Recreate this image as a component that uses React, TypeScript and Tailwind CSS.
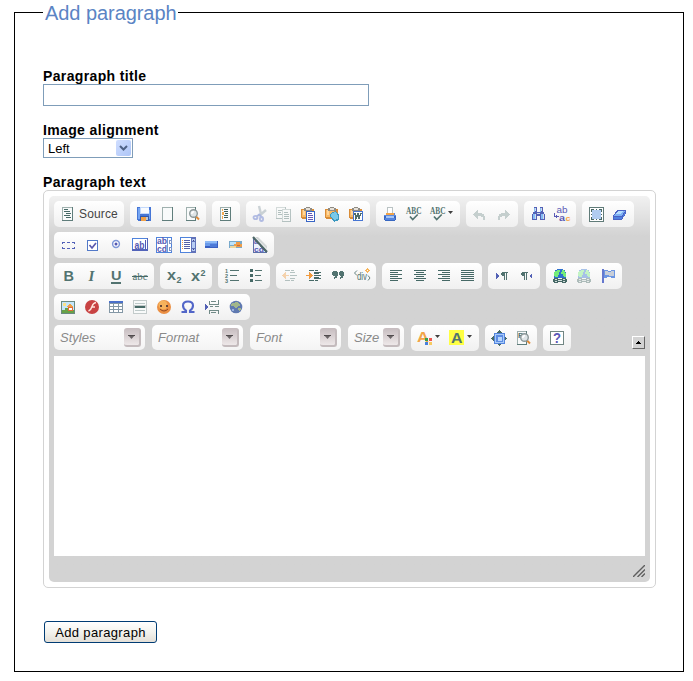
import type { ReactNode } from 'react';

const TEAL = '#527370';
const BLUE = '#5a59b5';

type GlyphProps = { x: number; y: number; s: number; c?: string; w?: number; b?: boolean; serif?: boolean; children: string };

function Label({ x, y, s, c = TEAL, w, b = true, serif = false, children }: GlyphProps) {
  return (
    <text x={x} y={y} fontSize={s} fill={c} textLength={w} lengthAdjust="spacingAndGlyphs" fontWeight={b ? 700 : 400} fontFamily={serif ? 'Liberation Serif, Times New Roman, serif' : 'Liberation Sans, Arial, sans-serif'}>
      {children}
    </text>
  );
}

function Page({ x = 2, w = 11, y = 1, h = 14, c = '#5f7d7b' }: { x?: number; w?: number; y?: number; h?: number; c?: string }) {
  return (
    <>
      <rect x={x + 0.5} y={y + 0.5} width={w - 1} height={h - 1} fill="#f8fafa" stroke="#9fb0ae" />
      <path d={`M${x + w - 0.5} ${y}V${y + h - 0.5}H${x}`} fill="none" stroke={c} />
    </>
  );
}

function Lens() {
  return (
    <g shapeRendering="auto">
      <path d="M12 10.5l3 3" stroke="#e08a38" strokeWidth="2" />
      <circle cx="9.5" cy="7.5" r="3.8" fill="#dfe5e7" stroke="#8c9899" strokeWidth="1.4" />
      <path d="M7.8 8q0-2.2 2.2-2.2" stroke="#fff" strokeWidth="1.5" fill="none" />
    </g>
  );
}

function Clip() {
  return (
    <>
      <path d="M1 3h13v10H2v-1H1z" fill="#d98d38" />
      <path d="M2 4h8v7H2z" fill="#f8ba67" />
      <path d="M3 4h2v5H3z" fill="#ffd69c" />
      <path d="M4 2h2V1h4v1h2v3H4z" fill="#8f8b83" />
      <path d="M6 2h4v2H6z" fill="#e5e0d8" />
    </>
  );
}

function Globe({ pale = false }: { pale?: boolean }) {
  return (
    <g opacity={pale ? 0.4 : 1}>
      <path d="M5 1h6v1h2v2h1v6H2V4h1V2h2z" fill="#2e70cf" />
      <path d="M5 2h3v2H7v3H6v2H3V8H2V4h1V3h2zM10 2h2v1h1v2h1v4h-2V8h-1V6H9V4h1z" fill="#74ec79" />
      <path d="M2 10h4v1h4v-1h4v1h1v3h-1v1h-4v-1H6v1H2v-1H1v-3h1z" fill="#466966" />
      <path d="M3 11h2v1H3zM11 11h2v1h-2zM6 12h4v1H6zM3 13h2v1H3zM11 13h2v1h-2z" fill="#d3dddd" />
    </g>
  );
}

const alignLines = (x1: number[], x2: number[]) => x1.map((a, k) => `M${a} ${2.5 + k * 2}H${x2[k]}`).join('');

const icons: Record<string, ReactNode> = {
  source: <><Page /><path d="M4 3.5h4M4 5.5h6M6 7.5h5M4 9.5h6M6 11.5h5" stroke="#466966" /></>,
  save: <><path d="M1 1h14v14H2v-1H1z" fill="#4676d6" /><path d="M2 2h2v11H2zM13 4h1v9h-1z" fill="#75a5f2" /><path d="M4 1h9v7H4z" fill="#c4d9fb" /><path d="M5 2h8v5H5z" fill="#f8fbff" /><path d="M4 10h9v5H4z" fill="#3158ab" /><path d="M5 11h5v4H5z" fill="#f0a045" /><path d="M10 11h2v3h-2z" fill="#bfcad5" /></>,
  newpage: <Page />,
  preview: <><Page w={10} /><Lens /></>,
  template: <><Page /><path d="M4 3h1v2H4zM4 6h2v3H4zM4 10h1v3H4z" fill="#f5a84f" /><path d="M6 3.5h4M6 5.5h4M7 7.5h3M6 9.5h4M6 11.5h4" stroke="#405f5c" /></>,
  cut: <g opacity=".5" shapeRendering="auto"><path d="M7 0l2 8M14 4L7 10" stroke="#9cabb2" strokeWidth="2.4" /><path d="M8 8l-4 3M8 9l2 3" stroke="#6278c9" strokeWidth="2" /><ellipse cx="3.5" cy="11.5" rx="2" ry="1.7" fill="none" stroke="#7084d2" strokeWidth="1.8" /><ellipse cx="9.5" cy="13" rx="1.6" ry="2" fill="none" stroke="#7084d2" strokeWidth="1.8" /></g>,
  copy: <g opacity=".42"><Page x={0} w={10} y={1} h={12} /><path d="M2 4.5h4M2 6.5h3M2 8.5h4" stroke={TEAL} /><Page x={6} w={9} y={3} h={13} /><path d="M8 6.5h4M8 8.5h5M8 10.5h5M8 12.5h5" stroke={TEAL} /></g>,
  paste: <><Clip /><rect x="6.5" y="5.5" width="8" height="10" fill="#fff" stroke="#3865c5" /><path d="M8 7.5h4M8 9.5h5M8 11.5h5M8 13.5h5" stroke="#6558b6" /></>,
  pastetext: <><Clip /><path d="M7 7l5-2 3 4v5l-5 2-4-6z" fill="#3b98c0" /><path d="M8 7l4-1 2 4v3l-4 1-3-4z" fill="#79c9e8" /></>,
  pasteword: <><Clip /><rect x="5.5" y="5.5" width="9" height="9" fill="#fff" stroke="#4675d3" /><path d="M7 7l1 5 2-4 1 4 2-5" fill="none" stroke="#4e6d6b" strokeWidth="1.6" /></>,
  print: <><path d="M5 1h6v6H5z" fill="#bac3c4" /><path d="M6 2h4v5H6z" fill="#fff" /><path d="M4 7h9v2h1v2H2V9h2z" fill="#5d8bdf" /><path d="M4 7h8v2H4z" fill="#f2a346" /><path d="M2 10h12v4h-1v1H3v-1H2z" fill="#3867c1" /><path d="M4 10h8v2H4z" fill="#a5c5f7" /><path d="M3 12h10v2H3z" fill="#5685dc" /></>,
  spell: <><Label x={0} y={8} s={10} w={15.5} serif>ABC</Label><path d="M4 10.5l2.7 3 5-5" stroke={TEAL} strokeWidth="1.7" fill="none" shapeRendering="auto" /></>,
  undo: <path d="M1 8.5L6 4v3h4v1h2v2h1v4h-2v-3H9v-1H6v3z" fill="#c5cfce" />,
  redo: <path d="M14 8.5L9 4v3H5v1H3v2H2v4h2v-3h2v-1h3v3z" fill="#c5cfce" />,
  find: <><path d="M4 1h3v5h3V1h3v5h1v2h1v6h-5v-4H7v4H2V8h1V6h1z" fill="#5361b5" /><path d="M4 2h1v4H4zM3 8h2v5H3zM10 2h1v4h-1zM11 8h2v5h-2z" fill="#83bdf6" /><path d="M5 2h1v3H5zM5 8h1v5H5zM11 2h1v3h-1zM13 8h1v5h-1zM7 7h3v1H7z" fill="#d3dceb" /></>,
  replace: <><Label x={2.5} y={7.3} s={9} c={BLUE} w={11} b={false}>ab</Label><Label x={5} y={14.8} s={9} c={BLUE} w={6}>a</Label><Label x={11.5} y={14.8} s={8} c="#f6a548" w={5}>c</Label><path d="M.5 7v3.5h4M2.5 9v3" stroke={BLUE} fill="none" /></>,
  selectall: <><rect x="1.5" y="1.5" width="14" height="14" fill="#fff" stroke="#607b78" /><rect x="4" y="4" width="9" height="9" fill="#b1ccf1" /><path d="M3 3h3v1H4v2H3zM11 3h3v3h-1V4h-2zM3 11h1v2h2v1H3zM13 11h1v3h-3v-1h2zM8 3h1v1H8zM8 13h1v1H8zM3 8h1v1H3zM13 8h1v1h-1z" fill="#496764" /></>,
  eraser: <><path d="M5 4h9v3l-4 7H1v-4z" fill="#4a62c4" /><path d="M6 5h7l-3 5H2z" fill="#7fb1f3" /><path d="M2 11h8v2H2zM11 10l2-4v2l-2 4z" fill="#4f80e0" /><path d="M6 5h5l-2 3H4z" fill="#b5ddff" /></>,
  form: <path d="M2 5.5h3m2 0h3m2 0h3M2 11.5h3m2 0h3m2 0h3M2.5 5v2m0 3v2M14.5 5v2m0 3v2" stroke="#5261b8" />,
  checkbox: <><rect x="3.5" y="3.5" width="10" height="10" fill="#fff" stroke="#5279c8" /><path d="M5.5 8l2.5 3 4-5" fill="none" stroke="#5a59ae" strokeWidth="1.7" shapeRendering="auto" /></>,
  radio: <g shapeRendering="auto"><circle cx="8" cy="7" r="3.4" fill="#fff" stroke="#7f97d8" strokeWidth="1.5" /><circle cx="8" cy="7" r="1.5" fill="#5356b0" /></g>,
  textfield: <><rect x=".5" y="1.5" width="15" height="12" fill="#fff" stroke="#4f83dc" /><path d="M0 13h15.5V1" fill="none" stroke="#5263b9" strokeWidth="1.5" /><Label x={2.5} y={11.5} s={10.5} c="#5558b2" w={10}>ab</Label><path d="M13.5 3v9" stroke="#5558b2" /></>,
  textarea: <><rect x=".5" y=".5" width="15" height="15" fill="#fff" stroke="#4f83dc" /><Label x={1} y={7.2} s={8.5} c="#5558b2" w={10}>ab</Label><Label x={1} y={14.8} s={8.5} c="#5558b2" w={10}>cd</Label><path d="M11.5 1v14M13 3h2v3h-2zM13 10h2v3h-2z" stroke="#7b95cb" fill="none" /></>,
  select: <><rect x=".5" y=".5" width="15" height="15" fill="#fff" stroke="#4f83dc" /><path d="M2 3.5h1M2 5.5h1M2 7.5h1M2 9.5h1M2 11.5h1" stroke="#ee9c42" /><path d="M4 3.5h6M4 5.5h6M4 7.5h6M4 9.5h6M4 11.5h6" stroke="#5360a8" /><path d="M11 0h5v16h-5z" fill="#6172b9" /><path d="M12 2h3v2h-3zM12 5h3v6h-3zM12 12h3v2h-3z" fill="#b8cdf3" /><path d="M13 3h1v1h-1zM13 12h1v1h-1z" fill="#424285" /></>,
  button: <><path d="M1 4h13v7H1z" fill="#395fc2" /><path d="M1 4h12v2H1z" fill="#8db9f6" /><path d="M1 6h12v3H1z" fill="#6a9aea" /><path d="M6 7h7v3H6z" fill="#4d7ad8" /></>,
  imagebutton: <><path d="M1 4h13v7H1z" fill="#78a9cb" /><path d="M2 5h9v3H2z" fill="#bde3fa" /><path d="M6 9V7h2V5h4v2h2v3H6z" fill="#ed9c48" /><path d="M2 9h6v2H2z" fill="#ebd7a0" /><path d="M9 8h3v1H9z" fill="#cf6939" /></>,
  hidden: <><path d="M1.5 1v14.5h13z" fill="#eef2fb" stroke="#5c70a9" /><Label x={2} y={7} s={7} c="#5558b2">a</Label><Label x={2} y={14.8} s={8} c="#5558b2" w={10}>cd</Label><path d="M1 0l14 15" stroke="#4e6767" strokeWidth="2.2" fill="none" shapeRendering="auto" /><path d="M3 0l12 12V9L6 0z" fill="#d3d7d8" shapeRendering="auto" /></>,
  bold: <Label x={3.5} y={13} s={14} w={10.5}>B</Label>,
  italic: <text x="4.5" y="13" fontSize="15" fontWeight="700" fontStyle="italic" fill="#527370" fontFamily="Liberation Serif, Times New Roman, serif">I</text>,
  underline: <><Label x={3} y={12} s={13.5} w={10.5}>U</Label><path d="M3 15h10" stroke={TEAL} strokeWidth="2" /></>,
  strike: <><Label x={0.5} y={11.5} s={10} w={15} serif b={false}>abc</Label><path d="M0 8.5h16" stroke="#466966" /></>,
  subscript: <><Label x={1} y={12} s={15} w={9}>x</Label><Label x={10.5} y={15} s={9} w={5}>2</Label></>,
  superscript: <><Label x={1} y={13} s={15} w={9}>x</Label><Label x={10.5} y={7.5} s={9} w={5}>2</Label></>,
  numbered: <><Label x={1} y={4.8} s={5.5}>1</Label><Label x={1} y={9.8} s={5.5}>2</Label><Label x={1} y={14.8} s={5.5}>3</Label><path d="M6 2.5h9M6 7.5h7M6 12.5h9" stroke={TEAL} /></>,
  bulleted: <><path d="M2 1h3v3H2zM2 6h3v3H2zM2 11h3v3H2z" fill="#466966" /><path d="M7 2.5h7M7 7.5h6M7 12.5h7" stroke={TEAL} /></>,
  outdent: <g opacity=".4"><path d="M3 2.5h5M9 2.5h3M8 4.5h5M8 7.5h7M8 10.5h5M3 12.5h5M9 12.5h3" stroke={TEAL} /><path d="M4 4v3h3v1H4v3L0 7.5z" fill="#f19b3e" /></g>,
  indent: <><path d="M3 2.5h5M9 2.5h3M8 4.5h7M8 5.5h5M8 7.5h7M8 9.5h5M8 10.5h7M3 12.5h5M9 12.5h3" stroke="#466966" /><path d="M3 4v3H0v1h3v3l4-3.5z" fill="#f19b3e" /></>,
  quote: <path d="M3 3h4v1h1v4H7v2H5v1H4V9h1V8H3V7H2V4h1zM10 3h3v1h1v4h-1v2h-2v1h-1V9h1V8H10V7H9V4h1z" fill={TEAL} />,
  div: <><Label x={3} y={12} s={11} w={10} b={false}>div</Label><path d="M3 2.5L.5 5 3 7.5M14 7.5l2 2.5-2 2.5" stroke="#668280" fill="none" shapeRendering="auto" /><path d="M13.5 0l2.5 2.5L13.5 5 11 2.5z" fill="#f7b459" /><path d="M13 2h1v1h-1z" fill="#fff" /></>,
  left: <path d={alignLines([2, 2, 2, 2, 2, 2], [14, 10, 14, 10, 14, 10])} stroke="#466966" />,
  center: <path d={alignLines([2, 4, 2, 4, 2, 4], [14, 12, 14, 12, 14, 12])} stroke="#466966" />,
  right: <path d={alignLines([2, 6, 2, 6, 2, 6], [14, 14, 14, 14, 14, 14])} stroke="#466966" />,
  justify: <path d="M1 2.5h13M1 4.5h13M1 6.5h13M1 8.5h13M1 10.5h13M1 12.5h13" stroke="#466966" />,
  ltr: <><path d="M2 5v6l3-3z" fill="#5361b5" /><path d="M8 4h6v1h-1v7h-1V5h-1v7h-1V8H8V7H7V5h1z" fill={TEAL} /></>,
  rtl: <><path d="M14 5v6l-3-3z" fill="#5361b5" /><path d="M4 4h6v1H9v7H8V5H7v7H6V8H4V7H3V5h1z" fill={TEAL} /></>,
  link: <Globe />,
  unlink: <Globe pale />,
  anchor: <><path d="M2 1h2v14H2z" fill="#6578ce" /><path d="M4 2h4v1h3V2h4v8h-4v-1H7v1H4z" fill="#6b95e3" /><path d="M5 3h3v1h3V3h3v5H9V7H5z" fill="#c8ced8" /></>,
  image: <><rect x="1.5" y="2.5" width="13" height="12" fill="#c4e6fb" stroke="#6a8a80" /><path d="M2 11h3V9h3v2h6v3H2z" fill="#68a248" /><path d="M8 8h5v4H8z" fill="#e46a37" /><path d="M9 9h3v2H9z" fill="#fff" /><path d="M3 4h3v3H3z" fill="#fbe28a" /><path d="M7 8V7l3-2 4 3z" fill="#f0a045" /></>,
  flash: <g shapeRendering="auto"><circle cx="8" cy="8" r="7" fill="#c84343" /><path d="M12 3.5Q9 4 8 7.5T4.5 12M7.5 8H11" stroke="#ffe4db" strokeWidth="1.4" fill="none" /></g>,
  table: <><path d="M1 2h14v12H1z" fill="#8397a5" /><path d="M2 5h3v2H2zM6 5h4v2H6zM11 5h3v2h-3zM2 8h3v2H2zM6 8h4v2H6zM11 8h3v2h-3zM2 11h3v2H2zM6 11h4v2H6zM11 11h3v2h-3z" fill="#fff" /><path d="M1 2h14v2H1z" fill="#4a70ca" /></>,
  rule: <><path d="M1 1h14v14H1z" fill="#c3cbcb" /><path d="M2 2h12v4H2zM2 9h12v5H2z" fill="#f8fafa" /><path d="M3 4.5h10M3 11.5h10" stroke="#bdc9c9" /><path d="M3 7h10v2H3z" fill="#466966" /></>,
  smile: <g shapeRendering="auto"><circle cx="8" cy="8" r="7" fill="#eb8f43" /><circle cx="7" cy="6" r="4.5" fill="#fbc066" opacity=".7" /><path d="M4 6h2v2H4zM10 6h2v2h-2z" fill="#674435" /><path d="M4 10q4 4 8 0" fill="none" stroke="#914821" /></g>,
  omega: <path d="M1.5 13H6v-1.5Q3 9.5 3 6.5 3 2.5 8 2.5t5 4q0 3-3 5V13h4.5" stroke="#5266c8" strokeWidth="2.1" fill="none" shapeRendering="auto" />,
  break: <><path d="M1 5v6l3-3z" fill="#5361b5" /><path d="M5 2v3h9V1M5 15v-4h9v4M6 7.5h3M11 7.5h4M7 2.5h5M7 13.5h5" stroke="#718a87" fill="none" /></>,
  world: <><circle cx="8" cy="8" r="6.3" fill="#5f79b0" shapeRendering="auto" /><path d="M4 4h3V3h3v1l2 1v2h-2l-1 2H7L5 7H3zM10 9h3v2l-2 1-2-2z" fill="#a1b68b" /><path d="M4 10h2v2H4z" fill="#9cb4e0" /></>,
  textcolor: <><Label x={0} y={12} s={14.5} c="#f2a548" w={12}>A</Label><path d="M8 8h3v3H8z" fill="#37a04c" /><path d="M12 8h3v3h-3z" fill="#ee5751" /><path d="M8 12h3v3H8z" fill="#477fde" /><path d="M12 12h3v3h-3z" fill="#f8ca5e" /></>,
  highlight: <><path d="M0 0h15v15H0z" fill="#ffff43" /><Label x={2} y={13} s={15} w={11.5}>A</Label></>,
  maximize: <><rect x="3.5" y="3.5" width="10" height="10" fill="#a8cbf8" stroke="#5485de" /><path d="M5 5h7v7H5z" fill="#5c8ce4" /><path d="M7 7h4v4H7z" fill="#b8d7fd" /><path d="M8.5 0L6 2.5h5zM8.5 16L6 13.5h5zM0 8.5L2.5 6v5zM16 8.5L13.5 6v5z" fill="#466966" /></>,
  blocks: <><Page w={10} /><Label x={3} y={8} s={8}>P</Label><Lens /></>,
  about: <><rect x="1.5" y="1.5" width="13" height="13" fill="#fff" stroke="#718683" /><Label x={4} y={13} s={14} c="#5b57b7" w={8}>?</Label></>,
};

function Icon({ name }: { name: string }) {
  return <svg viewBox="0 0 16 16" className="size-4 shrink-0 overflow-visible" shapeRendering="crispEdges">{icons[name]}</svg>;
}

function Group({ names, arrows = [] }: { names: string[]; arrows?: string[] }) {
  return (
    <div className="flex h-[26px] items-center rounded-[5px] bg-linear-to-b from-white to-[#f0f0f0] px-0.5">
      {names.map((name, k) => (
        <button key={k} className={`flex h-[26px] items-center px-1 ${arrows.includes(name + k) ? 'w-8' : 'w-6'}`}>
          <Icon name={name} />
          {arrows.includes(name + k) && <svg className="mb-1 ml-[2px] h-[3px] w-[5px] shrink-0" viewBox="0 0 5 3"><path d="M0 0h5L2.5 3z" fill="#3e3e3e" /></svg>}
        </button>
      ))}
    </div>
  );
}

function Combo({ label, small = false }: { label: string; small?: boolean }) {
  return (
    <div className={`mr-px flex h-[25px] items-center justify-between rounded-[5px] bg-linear-to-b from-white to-[#f4f4f4] pr-1 pl-1.5 ${small ? 'w-14' : 'w-[91px]'}`}>
      <span className="text-[13px] leading-4 text-[#8a8a8a] italic">{label}</span>
      <span className="flex h-[19px] w-[17px] items-center justify-center rounded-[3px] border-r-2 border-b-2 border-[#c4bbbd] bg-linear-to-b from-[#c6bcbf] to-[#eee8e9]">
        <svg className="h-1 w-[7px]" viewBox="0 0 7 4"><path d="M0 0h7L3.5 4z" fill="#6b6567" /><path d="M0 0h7v1H0z" fill="#514c4e" /></svg>
      </span>
    </div>
  );
}

const row = 'flex h-[26px] gap-1.5';
const fieldLabel = 'block h-4 text-[14px] leading-4 font-bold tracking-[0.36px]';

export default function App() {
  return (
    <main className="h-[681px] w-[693px] overflow-hidden bg-white pt-3 pl-3.5 font-['Liberation_Sans',Arial,sans-serif] text-black">
      <section className="h-[660px] w-[670px] border border-black pl-7">
        <h1 className="-mt-[13px] h-[25px] w-[135px] bg-white pl-0.5 text-[20px] leading-[26px] tracking-[-0.06px] whitespace-nowrap text-[#5b84c4]">Add paragraph</h1>
        <label className={`mt-[43px] ${fieldLabel}`}>Paragraph title</label>
        <input className="block h-[22px] w-[326px] border border-[#7f9db9] bg-white px-1 text-[13px] outline-none" />
        <label className={`mt-4 ${fieldLabel}`}>Image alignment</label>
        <button className="flex h-5 w-[90px] items-center justify-between border border-[#7f9db9] bg-white pr-px pl-1 text-[13px]">
          <span className="pt-px">Left</span>
          <span className="flex h-4 w-[15px] items-center justify-center rounded-[2px] bg-linear-to-br from-[#d0deff] to-[#adc5f7]">
            <svg className="h-[6px] w-[9px]" viewBox="0 0 9 6"><path d="M1 1l3.5 3.5L8 1" stroke="#4d6185" strokeWidth="2" fill="none" /></svg>
          </span>
        </button>
        <label className={`mt-4 ${fieldLabel}`}>Paragraph text</label>
        <div className="h-[398px] w-[613px] rounded-[5px] border border-[#d3d3d3] p-[5px]">
          <div className="h-[386px] w-[601px] rounded-[5px] bg-[#d3d3d3] bg-linear-to-b from-[#f1f1f1] to-[#d3d3d3] to-[40px] px-[5px] pt-[5px]">
            <div className="flex h-[155px] flex-col gap-[5px]">
              <div className={row}>
                <button className="flex h-[26px] w-[70px] items-center gap-[3px] rounded-[5px] bg-linear-to-b from-white to-[#f0f0f0] pl-1.5 text-[12px] tracking-[0.15px] text-[#444]">
                  <Icon name="source" /><span>Source</span>
                </button>
                <Group names={['save', 'newpage', 'preview']} />
                <Group names={['template']} />
                <Group names={['cut', 'copy', 'paste', 'pastetext', 'pasteword']} />
                <Group names={['print', 'spell', 'spell']} arrows={['spell2']} />
                <Group names={['undo', 'redo']} />
                <Group names={['find', 'replace']} />
                <Group names={['selectall', 'eraser']} />
              </div>
              <div className={row}>
                <Group names={['form', 'checkbox', 'radio', 'textfield', 'textarea', 'select', 'button', 'imagebutton', 'hidden']} />
              </div>
              <div className={row}>
                <Group names={['bold', 'italic', 'underline', 'strike']} />
                <Group names={['subscript', 'superscript']} />
                <Group names={['numbered', 'bulleted']} />
                <Group names={['outdent', 'indent', 'quote', 'div']} />
                <Group names={['left', 'center', 'right', 'justify']} />
                <Group names={['ltr', 'rtl']} />
                <Group names={['link', 'unlink', 'anchor']} />
              </div>
              <div className={row}>
                <Group names={['image', 'flash', 'table', 'rule', 'smile', 'omega', 'break', 'world']} />
              </div>
              <div className={row}>
                <Combo label="Styles" />
                <Combo label="Format" />
                <Combo label="Font" />
                <Combo label="Size" small />
                <Group names={['textcolor', 'highlight']} arrows={['textcolor0', 'highlight1']} />
                <Group names={['maximize', 'blocks']} />
                <Group names={['about']} />
                <button className="mt-[11px] ml-auto flex h-[13px] w-[13px] items-center justify-center border border-t-white border-r-[#666] border-b-[#666] border-l-white bg-[#d3d3d3]">
                  <svg className="h-[3px] w-[5px]" viewBox="0 0 5 3" shapeRendering="crispEdges"><path d="M2 0h1v1h1v1h1v1H0V2h1V1h1z" fill="#000" /></svg>
                </button>
              </div>
            </div>
            <div className="h-[200px] w-[591px] bg-white" />
            <div className="flex h-[21px] items-end justify-end">
              <svg className="size-3" viewBox="0 0 12 12"><path d="M0 12L12 0M4.5 12L12 4.5M8.5 12L12 8.5" stroke="#5e5e5e" strokeWidth="1.4" /></svg>
            </div>
          </div>
        </div>
        <button className="mt-[33px] ml-px block h-[22px] w-[113px] rounded-[3px] border border-[#003c74] bg-linear-to-b from-white via-[#f3f3ee] to-[#e3dfd7] text-[13px] leading-[21px] tracking-[0.36px]">Add paragraph</button>
      </section>
    </main>
  );
}
